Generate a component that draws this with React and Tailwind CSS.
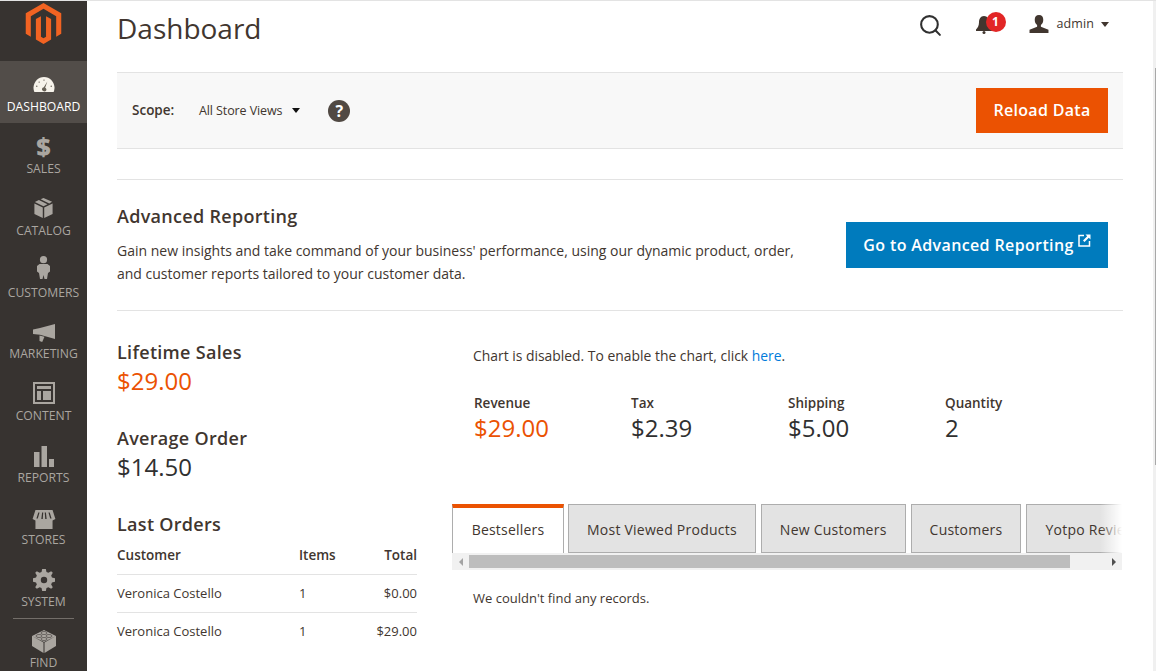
import React from "react";
import { Search } from "lucide-react";

const ICON = "#aaa6a0";

function Logo() {
  return (
    <svg width="41" height="41" viewBox="0 0 24 24">
      <path fill="#f26322" d="M12 24l-4.455-2.572v-12l2.97-1.715v12.001l1.485.902 1.485-.902V7.713l2.97 1.715v12L12 24zM22.391 6v12l-2.971 1.715V7.713L12 3.43 4.574 7.713v12L1.609 18V6L12 0l10.391 6z" />
    </svg>
  );
}

const icons = {
  dashboard: (
    <svg width="22" height="15" viewBox="0 0 24 17" className="mb-[1px]">
      <path fill="#f7f3eb" d="M12 0C5.400 0 .4 5.400 .1 12c0 2 .3 3.500 1 5h21.800c.7-1.500 1-3 1-5C23.600 5.400 18.600 0 12 0z" />
      <path fill="#676056" d="M15.800 5 L13.300 12.200 A2.200 2.200 0 1 1 10.800 15.600 A2.200 2.200 0 0 1 11.800 11.500 Z" />
      <circle cx="12" cy="3.500" r=".8" fill="#676056" /><circle cx="6.500" cy="5.800" r=".8" fill="#676056" />
      <circle cx="3.800" cy="10.500" r=".8" fill="#676056" /><circle cx="20.200" cy="10.500" r=".8" fill="#676056" />
    </svg>
  ),
  sales: <span className="text-[25px] leading-[24px] mb-[2px] font-extrabold text-[#aaa6a0]">$</span>,
  catalog: (
    <svg width="19" height="20" viewBox="0 0 20 22" className="mb-[1px]">
      <path fill={ICON} d="M10 0 L19.500 4.200 L16.300 6 L6.800 1.500 Z M4.900 2.300 L14.400 6.900 L10 9 L.5 4.500 Z" />
      <path fill={ICON} d="M0 6 L9.200 10.500 V22 L0 17.500 Z M20 6 V17.500 L10.800 22 V10.500 Z" />
    </svg>
  ),
  customers: (
    <svg width="13" height="23" viewBox="0 0 13 23" className="mb-[6px]">
      <circle cx="6.500" cy="3.700" r="3.600" fill={ICON} />
      <path fill={ICON} d="M2.500 8 H10.500 L13 10 V15.500 L11 17 L10 23 H7.500 L6.500 19 L5.500 23 H3 L2 17 L0 15.500 V10 Z" />
    </svg>
  ),
  marketing: (
    <svg width="22" height="18" viewBox="0 0 22 18" className="mt-[1px]">
      <path fill={ICON} d="M22 0 V15 L7 10.700 L0 10 V5.500 L7 4 Z" />
      <path fill={ICON} d="M6.500 11.500 L11.500 12.800 L9.200 18 L6.500 17 Z" />
    </svg>
  ),
  content: (
    <svg width="22" height="22" viewBox="0 0 22 22" className="mb-[3px]">
      <path fill={ICON} fillRule="evenodd" d="M0 0H22V22H0Z M2 2V20H20V2Z" />
      <path fill={ICON} d="M4 4H18V7H4Z M4 9H8V18H4Z M10 9H18V18H10Z" />
    </svg>
  ),
  reports: (
    <svg width="20" height="21" viewBox="0 0 20 21">
      <path fill={ICON} d="M0 6H5.500V21H0Z M7.500 0H13V21H7.500Z M15 13H20V21H15Z" />
    </svg>
  ),
  stores: (
    <svg width="24" height="19" viewBox="0 0 24 20" className="mt-[2px]">
      <path fill={ICON} fillRule="evenodd" d="M3 0H21L24 9.500 L21 11 V20 H3 V11 L0 9.500Z M6 2.500 L4 9 H5.500 L7.300 2.500Z M10 2.500 L9.200 9.500 H10.700 L11.200 2.500Z M12.800 2.500 L13.300 9.500 H14.800 L14 2.500Z M16.700 2.500 L18.500 9 H20 L18 2.500Z" />
    </svg>
  ),
  system: (
    <svg width="22" height="22" viewBox="0 0 24 24">
      <path fill={ICON} fillRule="evenodd" d="M10 0H14L14.700 3.300 L16.800 4.200 L19.800 2.400 L21.600 4.200 L19.800 7.200 L20.700 9.300 L24 10V14L20.700 14.700 L19.800 16.800 L21.600 19.800 L19.800 21.600 L16.800 19.800 L14.700 20.700 L14 24H10L9.300 20.700 L7.200 19.800 L4.200 21.600 L2.400 19.800 L4.200 16.800 L3.300 14.700 L0 14V10L3.300 9.300 L4.200 7.200 L2.400 4.200 L4.200 2.400 L7.200 4.200 L9.300 3.300Z M12 8.500A3.500 3.500 0 1 0 12 15.500A3.500 3.500 0 1 0 12 8.500Z" />
    </svg>
  ),
  find: (
    <svg width="24" height="23" viewBox="0 0 24 23">
      <path fill={ICON} d="M12 0 L24 6 V16 L12.500 23 V12.500 L24 6 L12 12 L0 6 Z M0 6 L11.500 12.500 V23 L0 16 Z" />
      <ellipse cx="12" cy="3" rx="3" ry="1.500" fill={ICON} stroke="#373330" strokeWidth=".6" />
      <ellipse cx="7" cy="6" rx="3" ry="1.500" fill={ICON} stroke="#373330" strokeWidth=".6" />
      <ellipse cx="17" cy="6" rx="3" ry="1.500" fill={ICON} stroke="#373330" strokeWidth=".6" />
      <ellipse cx="12" cy="9" rx="3" ry="1.500" fill={ICON} stroke="#373330" strokeWidth=".6" />
    </svg>
  ),
};

const NAV = [
  ["dashboard", "DASHBOARD"], ["sales", "SALES"], ["catalog", "CATALOG"], ["customers", "CUSTOMERS"],
  ["marketing", "MARKETING"], ["content", "CONTENT"], ["reports", "REPORTS"], ["stores", "STORES"], ["system", "SYSTEM"],
];

function NavItem({ id, label }) {
  const active = id === "dashboard";
  return (
    <div className={`h-[62px] flex flex-col items-center justify-end pb-[8px] ${active ? "bg-[#524d49]" : ""}`}>
      <div className="h-[28px] flex items-center justify-center">{icons[id]}</div>
      <div className={`text-[12.200px] leading-[16px] ${active ? "text-white" : "text-[#aaa6a0]"}`}>{label}</div>
    </div>
  );
}

function Stat({ label, value, orange }) {
  return (
    <div className="w-[157px] pl-[1px]">
      <div className="text-[13.500px] font-semibold leading-[20px] text-[#41362f]">{label}</div>
      <div className={`text-[24px] leading-[30px] ${orange ? "text-[#eb5202]" : "text-[#303030]"}`}>{value}</div>
    </div>
  );
}

function Tab({ label, active, cut }) {
  if (active) {
    return (
      <div className="h-[49px] w-[112px] mr-[-1px] shrink-0 bg-white border-x border-[#adadad] border-t-[4px] border-t-[#eb5202] pb-[2px] flex items-center justify-center text-[14px] tracking-[0.2px] text-[#41362f]">
        {label}
      </div>
    );
  }
  return (
    <div className={`h-[49px] bg-[#e3e3e3] border-y border-l border-[#adadad] pt-[2px] flex items-center text-[14px] tracking-[0.24px] text-[#41362f] ${cut ? "pl-[18px] flex-1 min-w-0 overflow-hidden" : "px-[18px] shrink-0 border-r"}`}>
      <span className="whitespace-nowrap">{label}</span>
    </div>
  );
}

export default function App() {
  return (
    <div className="relative flex h-[671px] w-[1156px] overflow-hidden bg-white border-t border-[#e3e3e3] text-[#41362f] font-['Open_Sans',sans-serif]">
      <aside className="w-[87px] shrink-0 bg-[#373330] flex flex-col overflow-hidden">
        <div className="h-[60px] shrink-0 flex justify-center pt-[2px]"><Logo /></div>
        {NAV.map(([id, label]) => <NavItem key={id} id={id} label={label} />)}
        <div className="mx-[13px] border-t border-[#736e69] h-0" />
        <div className="flex flex-col items-center pt-[11px]">
          {icons.find}
          <div className="text-[12.200px] leading-[16px] mt-[2px] text-[#aaa6a0]">FIND</div>
        </div>
      </aside>

      <main className="flex-1 min-w-0 pl-[30px] pr-[33px]">
        <header className="h-[71px] flex items-start justify-between">
          <h1 className="text-[28px] leading-[38px] mt-[8px] text-[#41362f]">Dashboard</h1>
          <div className="flex items-center h-[46px] text-[#41362f]">
            <Search size={25} strokeWidth={2} className="text-[#303030] mr-[33px] mt-[2px]" />
            <div className="relative w-[16px] h-[18px] mr-[37px] mt-[2px]">
              <svg width="16" height="18" viewBox="0 0 16 18">
                <path fill="#41362f" d="M8 0C4.500 0 3 3 3 6.500 3 10 1.500 12 0 13.500V15H16V13.500C14.500 12 13 10 13 6.500 13 3 11.500 0 8 0Z" />
                <circle cx="8" cy="16.500" r="1.500" fill="#41362f" />
              </svg>
              <span className="absolute left-[10px] -top-[4px] w-[20px] h-[20px] rounded-full bg-[#e22626] text-white text-[12px] font-bold flex items-center justify-center">1</span>
            </div>
            <svg width="20" height="18" viewBox="0 0 20 19" className="mr-[8px]">
              <path fill="#41362f" d="M10 0C7 0 5.500 2 5.500 5c0 2.500 1 4.500 2.500 5.500v2L0 15.500V19H20V15.500L12 12.500v-2C13.500 9.500 14.500 7.500 14.500 5 14.500 2 13 0 10 0Z" />
            </svg>
            <span className="text-[12.500px] tracking-[0.1px] text-[#41362f]">admin</span>
            <span className="ml-[7px] mr-[14px] border-x-[4px] border-x-transparent border-t-[5px] border-t-[#41362f]" />
          </div>
        </header>

        <div className="h-[77px] bg-[#f8f8f8] border-y border-[#e3e3e3] flex items-center pl-[15px] pr-[15px]">
          <span className="text-[13.500px] font-semibold w-[67px]">Scope:</span>
          <span className="text-[12.500px] text-[#41362f] tracking-[-0.1px] mt-[1px]">All Store Views</span>
          <span className="ml-[10px] border-x-[4px] border-x-transparent border-t-[5px] border-t-[#111]" />
          <span className="ml-[28px] w-[22px] h-[22px] rounded-full bg-[#514943] text-white text-[16px] font-bold flex items-center justify-center">?</span>
          <button className="ml-auto w-[132px] h-[45px] pb-[2px] bg-[#eb5202] text-white text-[16px] font-semibold tracking-[0.3px]">Reload Data</button>
        </div>

        <div className="mt-[30px] h-[132px] border-y border-[#e3e3e3] flex items-start justify-between pr-[15px]">
          <div className="pt-[24px] w-[690px]">
            <h2 className="text-[18px] font-semibold leading-[24px] tracking-[0.3px]">Advanced Reporting</h2>
            <p className="text-[14px] leading-[23px] mt-[11px]">
              Gain new insights and take command of your business' performance, using our dynamic product, order, and customer reports tailored to your customer data.
            </p>
          </div>
          <button className="mt-[42px] w-[262px] h-[46px] bg-[#007bbd] text-white text-[16px] font-semibold tracking-[0.37px] flex items-center justify-center">
            Go to Advanced Reporting
            <svg width="13" height="13" viewBox="0 0 13 13" className="ml-[4px] mb-[9px]">
              <path fill="none" stroke="#fff" strokeWidth="1.500" d="M6 1.500H1V12H11.500V7" />
              <path fill="#fff" d="M7.500 .5H12.500V5.500L10.800 3.800 6.500 8 5 6.500 9.200 2.200Z" />
            </svg>
          </button>
        </div>

        <div className="flex">
          <section className="w-[300px] shrink-0 pt-[29px]">
            <h3 className="text-[18px] font-semibold leading-[24px] tracking-[0.3px]">Lifetime Sales</h3>
            <div className="text-[24px] leading-[32px] mt-[1px] text-[#eb5202]">$29.00</div>
            <h3 className="text-[18px] font-semibold leading-[24px] tracking-[0.3px] mt-[29px]">Average Order</h3>
            <div className="text-[24px] leading-[32px] mt-[1px] text-[#303030]">$14.50</div>
            <h3 className="text-[18px] font-semibold leading-[24px] tracking-[0.3px] mt-[29px]">Last Orders</h3>
            <table className="w-full text-[13px] mt-[1px]">
              <thead>
                <tr className="border-b border-[#e3e3e3] h-[37px] text-[13.500px]">
                  <th className="text-left font-semibold">Customer</th>
                  <th className="text-left font-semibold w-[68px]">Items</th>
                  <th className="text-right font-semibold w-[50px]">Total</th>
                </tr>
              </thead>
              <tbody>
                <tr className="border-b border-[#e3e3e3] h-[38px] [&_td]:pt-[2px]">
                  <td>Veronica Costello</td><td>1</td><td className="text-right">$0.00</td>
                </tr>
                <tr className="h-[38px]">
                  <td>Veronica Costello</td><td>1</td><td className="text-right">$29.00</td>
                </tr>
              </tbody>
            </table>
          </section>

          <section className="ml-[35px] mr-[1px] flex-1 min-w-0 pt-[35px]">
            <p className="text-[13.900px] leading-[20px] ml-[21px]">
              Chart is disabled. To enable the chart, click <span className="text-[#007bdb]">here</span>.
            </p>
            <div className="flex ml-[21px] mt-[27px]">
              <Stat label="Revenue" value="$29.00" orange />
              <Stat label="Tax" value="$2.39" />
              <Stat label="Shipping" value="$5.00" />
              <Stat label="Quantity" value="2" />
            </div>
            <div className="relative mt-[61px] overflow-hidden">
              <div className="flex gap-[5px]">
                <Tab label="Bestsellers" active />
                <Tab label="Most Viewed Products" />
                <Tab label="New Customers" />
                <Tab label="Customers" />
                <Tab label="Yotpo Reviews" cut />
              </div>
              <div className="absolute right-0 top-0 h-[49px] w-[22px] bg-gradient-to-r from-transparent to-white" />
            </div>
            <div className="h-[17px] bg-[#f1f1f1] flex items-center">
              <span className="w-[17px] flex justify-center"><span className="border-y-[4px] border-y-transparent border-r-[4px] border-r-[#a3a3a3]" /></span>
              <div className="w-[601px] h-[13px] bg-[#bdbdbd]" />
              <span className="ml-auto w-[17px] flex justify-center"><span className="border-y-[4px] border-y-transparent border-l-[4px] border-l-[#505050]" /></span>
            </div>
            <p className="text-[13px] leading-[18px] ml-[21px] mt-[19px]">We couldn't find any records.</p>
          </section>
        </div>
      </main>

      {/* page scrollbar at the right edge */}
      <div className="absolute right-0 top-0 bottom-0 w-[3px] bg-[#f0f0f0]">
        <div className="absolute right-0 top-[67px] h-[397px] w-[1px] bg-[#a8a8a8]" />
      </div>
    </div>
  );
}
